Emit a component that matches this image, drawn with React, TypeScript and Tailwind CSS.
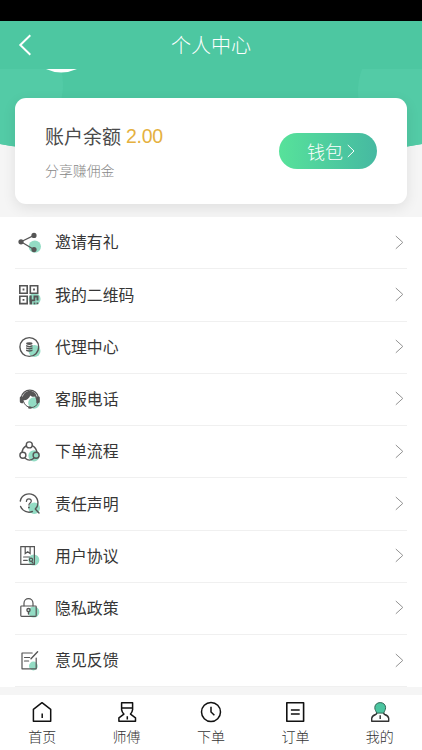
import type { ReactNode } from "react";

const INK = "#555555";
const MINT = "#93dcc4";

function RowIcon({ cx, cy, r = 6, children }: { cx: number; cy: number; r?: number; children: ReactNode }) {
  return (
    <svg viewBox="0 0 24 24" className="ml-[3px] h-6 w-6 shrink-0" fill="none" stroke={INK} strokeWidth="1.4" strokeLinecap="round" strokeLinejoin="round">
      <circle cx={cx} cy={cy} r={r} fill={MINT} stroke="none" />
      {children}
    </svg>
  );
}

const rows: { label: string; icon: ReactNode }[] = [
  {
    label: "邀请有礼",
    icon: (
      <RowIcon cx={16.8} cy={15.6} r={6.2}>
        <path d="M16 4.4 3 10.8l13 7.8" strokeWidth="1.2" />
        <g fill={INK} stroke="none">
          <circle cx="16" cy="4.4" r="2.6" />
          <circle cx="3" cy="10.8" r="2.6" />
          <circle cx="16" cy="18.6" r="2.6" />
        </g>
      </RowIcon>
    ),
  },
  {
    label: "我的二维码",
    icon: (
      <RowIcon cx={16.6} cy={16} r={6}>
        <g strokeWidth="1.6" strokeLinejoin="miter">
          <path d="M1.8 2.8h7.4v7.4H1.8zM12.3 2.8h7.4v7.4h-7.4zM1.8 13.2h7.4v7.4H1.8z" />
        </g>
        <g fill={INK} stroke="none">
          <path d="M4.6 5.6h1.8v1.8H4.6zM15.1 5.6h1.8v1.8h-1.8zM4.6 16h1.8v1.8H4.6z" />
          <path d="M11.5 12.4h2.2v4h1.8v-4h5v5.2h-2v-3h-1.2v3.6h-3.2v3.2h-2.6zM15.6 19.4h1.8v1.9h-1.8zM18.5 19.4h1.8v1.9h-1.8z" />
        </g>
      </RowIcon>
    ),
  },
  {
    label: "代理中心",
    icon: (
      <RowIcon cx={16.5} cy={16} r={6}>
        <circle cx="11.3" cy="12" r="9.4" />
        <g fill={INK} stroke="none">
          <ellipse cx="11.3" cy="8.6" rx="3.2" ry="1.4" />
          <path d="M8.1 10.1q3.2 1.6 6.4 0v1.5q-3.2 1.6-6.4 0zM8.1 12.3q3.2 1.6 6.4 0v1.5q-3.2 1.6-6.4 0zM8.1 14.5q3.2 1.6 6.4 0V16q-3.2 1.6-6.4 0z" />
        </g>
      </RowIcon>
    ),
  },
  {
    label: "客服电话",
    icon: (
      <RowIcon cx={16} cy={16} r={5.8}>
        <path d="M3.2 10.5a8.7 8.6 0 0 1 17.2 0" strokeWidth="1.3" />
        <path d="M4.6 14C4 6.5 8 4 11.8 4S19.6 6.5 19 14C18.2 12.4 17.3 10.8 17.1 9.4 14.7 10 13.5 9.4 12.4 8.4 11 11.4 8.7 12.9 6.2 13.3z" fill={INK} stroke="none" />
        <path d="M1.8 10.6q0-1.2 1.3-1.2h2.2v6.8H3.6q-1.8 0-1.8-1.7zM21.8 10.6q0-1.2-1.3-1.2h-2.2v6.8H20q1.8 0 1.8-1.7z" fill={INK} stroke="none" />
        <path d="M5.5 14.5Q7.3 20 12 20.2M19.8 15.7q-1.3 4.5-6.2 4.9" strokeWidth="1" />
        <ellipse cx="12" cy="20.7" rx="2" ry="1.1" fill={INK} stroke="none" />
      </RowIcon>
    ),
  },
  {
    label: "下单流程",
    icon: (
      <RowIcon cx={16} cy={15.8} r={5.6}>
        <circle cx="11.3" cy="4.9" r="3" />
        <circle cx="4.9" cy="15.3" r="3" />
        <circle cx="18.1" cy="15.3" r="3" />
        <path d="M8.1 5.8A8.7 8.7 0 0 0 4 12.1M14.6 5.8A8.7 8.7 0 0 1 18.9 12.1M7.2 18.3Q11.4 21.9 15.8 18.3" />
      </RowIcon>
    ),
  },
  {
    label: "责任声明",
    icon: (
      <RowIcon cx={16.2} cy={16.2} r={5.8}>
        <path d="M2.3 9A8.9 8.9 0 1 1 17.3 17.1L21 21M2.6 14.5a9 9 0 0 0 11.8 5" />
        <path d="M8.4 9.4q.1-2.6 2.5-2.6t2.4 2.3c0 1.9-2.4 1.9-2.4 4" strokeWidth="1.2" />
        <circle cx="10.9" cy="15.4" r=".9" fill={INK} stroke="none" />
      </RowIcon>
    ),
  },
  {
    label: "用户协议",
    icon: (
      <RowIcon cx={15.8} cy={16} r={5.5}>
        <g strokeWidth="1.2" strokeLinejoin="miter">
          <path d="M2.8 2.6h13.6v17.8H2.8zM7.2 2.8v6.7l2.5-1.8 2.4 1.8V2.8M5.6 13h5.8M5.6 16.3h3.7" />
          <circle cx="13" cy="15.8" r="1.6" />
          <path d="m13.7 17.5 1.4 1.7" />
        </g>
      </RowIcon>
    ),
  },
  {
    label: "隐私政策",
    icon: (
      <RowIcon cx={15.8} cy={16} r={5.6}>
        <rect x="2.8" y="10" width="15.4" height="10.4" rx=".8" strokeWidth="1.2" />
        <path d="M6 9.8V7.2a4.5 4.5 0 0 1 9 0v2.6" strokeWidth="1.2" />
        <circle cx="10.5" cy="14.1" r="1.6" />
        <path d="M10.5 16v2" />
      </RowIcon>
    ),
  },
  {
    label: "意见反馈",
    icon: (
      <RowIcon cx={15.4} cy={17} r={4.4}>
        <path d="M14.2 4H4v15.8h14.2V9M6.5 8.5h5.2M6.5 12h4.1" strokeWidth="1.2" />
        <path d="m13 9.7 6.6-6.9" strokeWidth="1.4" />
      </RowIcon>
    ),
  },
];

function TabIcon({ children }: { children: ReactNode }) {
  return (
    <svg viewBox="0 0 24 24" className="h-6 w-6" fill="none" stroke="#111111" strokeWidth="1.5" strokeLinejoin="round">
      {children}
    </svg>
  );
}

const tabs: { label: string; icon: ReactNode }[] = [
  {
    label: "首页",
    icon: (
      <TabIcon>
        <path d="M3.4 9.3 12 2.7l8.7 6.6v11.9H3.4zM12.2 13.4v4.7" />
      </TabIcon>
    ),
  },
  {
    label: "师傅",
    icon: (
      <TabIcon>
        <path d="M6.6 2.7h11v7q-.3 2.4-2.1 4.4l5 3.8v3.3H3.9v-3.3l5-3.8Q6.9 12.1 6.6 9.7zM6.6 8h11M12.3 16.2v3.4" />
      </TabIcon>
    ),
  },
  {
    label: "下单",
    icon: (
      <TabIcon>
        <circle cx="12" cy="12" r="9.5" />
        <path d="M12 6.7V12l3.4 3.2" />
      </TabIcon>
    ),
  },
  {
    label: "订单",
    icon: (
      <TabIcon>
        <path d="M3.8 2.8h16.8v18.4H3.8zM7.9 10h8.8M7.9 14h8.8" strokeWidth="1.6" />
      </TabIcon>
    ),
  },
  {
    label: "我的",
    icon: (
      <TabIcon>
        <path d="M8.9 12.6q-.1 1.3-1.3 1.9-3.6 1.4-3.9 3.8v2.9h17v-2.9q-.3-2.4-3.9-3.8-1.2-.6-1.3-1.9" stroke="#333" strokeWidth="1.4" />
        <path d="M12.2 2.6c3.4 0 5.4 2.3 5.4 5.1 0 2.4-1.4 3.6-1.9 5.4H8.7c-.5-1.8-1.9-3-1.9-5.4 0-2.8 2-5.1 5.4-5.1z" fill="#4bc5a0" stroke="#356858" strokeWidth="1" />
        <path d="M12.2 15.3v3.8" stroke="#333" strokeWidth="1.4" />
      </TabIcon>
    ),
  },
];

function Chevron() {
  return (
    <svg viewBox="0 0 9 16" className="h-4 w-[9px] shrink-0" fill="none" stroke="#929292" strokeWidth="1">
      <path d="m.8 1 7 6.4-7 6.4" />
    </svg>
  );
}

export default function App() {
  return (
    <div className="flex h-[750px] w-[422px] flex-col overflow-hidden bg-[#f5f5f5] font-['Noto_Sans_CJK_SC',sans-serif]">
      <div className="h-[21px] shrink-0 bg-black" />
      <header className="grid h-12 shrink-0 grid-cols-3 items-center bg-[#4dc7a1] text-white">
        <svg viewBox="0 0 14 22" className="ml-[18px] h-[22px] w-[14px]" fill="none" stroke="currentColor" strokeWidth="2">
          <path d="M12.3 1.3 2.3 11l10 9.7" />
        </svg>
        <h1 className="text-center text-[20px] leading-7 font-light">个人中心</h1>
      </header>

      <section className="relative h-[148px] shrink-0 overflow-hidden">
        <svg viewBox="0 0 422 148" className="absolute inset-0 h-full w-full">
          <defs>
            <clipPath id="banner">
              <path d="M0 0h422v75Q211 115 0 75z" />
            </clipPath>
          </defs>
          <g clipPath="url(#banner)">
            <path d="M0 0h422v148H0z" fill="#4dc7a1" />
            <circle cx="1" cy="16" r="62" fill="#53cba6" />
            <circle cx="420" cy="22" r="62" fill="#53cba6" />
          </g>
          <path d="M46 0Q61 7 77 0z" fill="#fff" />
        </svg>
        <div className="relative mx-[15px] mt-[29px] flex h-[106px] items-center justify-between rounded-[11px] bg-white pr-[30px] pl-[30px] shadow-[0_4px_14px_rgba(0,0,0,0.09)]">
          <div className="flex flex-col gap-[10px]">
            <div className="flex items-center gap-[5px] text-[19px] leading-7 text-[#4a4a4a]">
              <span className="-mt-px">账户余额</span>
              <span className="font-['Liberation_Sans',sans-serif] text-[19.5px] tracking-[-0.3px] text-[#e5b13f]">2.00</span>
            </div>
            <div className="text-[13.9px] leading-5 font-light text-[#888]">分享赚佣金</div>
          </div>
          <button className="flex h-9 w-[98px] items-center justify-center gap-1 rounded-full bg-linear-to-r from-[#57e29a] to-[#46b9a1] pl-[6px] text-[18px] font-light text-white">
            钱包
            <svg viewBox="0 0 8 14" className="h-[14px] w-2" fill="none" stroke="currentColor" strokeWidth="1">
              <path d="m.8 1 6.2 6-6.2 6" />
            </svg>
          </button>
        </div>
      </section>

      <main className="h-[470px] shrink-0 bg-white px-[15px]">
        {rows.map(({ label, icon }) => (
          <div key={label} className="flex h-[52.25px] items-center border-b border-[#f0f0f0] pr-[3px]">
            {icon}
            <span className="ml-[13px] flex-1 pb-[0.5px] text-[15.9px] leading-6 text-[#363636]">{label}</span>
            <Chevron />
          </div>
        ))}
      </main>
      <div className="h-[7.5px] shrink-0 bg-[#f5f5f5]" />

      <nav className="grid flex-1 grid-cols-5 bg-white">
        {tabs.map(({ label, icon }) => (
          <div key={label} className="flex flex-col items-center pt-[5px]">
            {icon}
            <span className="mt-[2px] text-[14px] leading-5 font-light text-[#333]">{label}</span>
          </div>
        ))}
      </nav>
    </div>
  );
}
